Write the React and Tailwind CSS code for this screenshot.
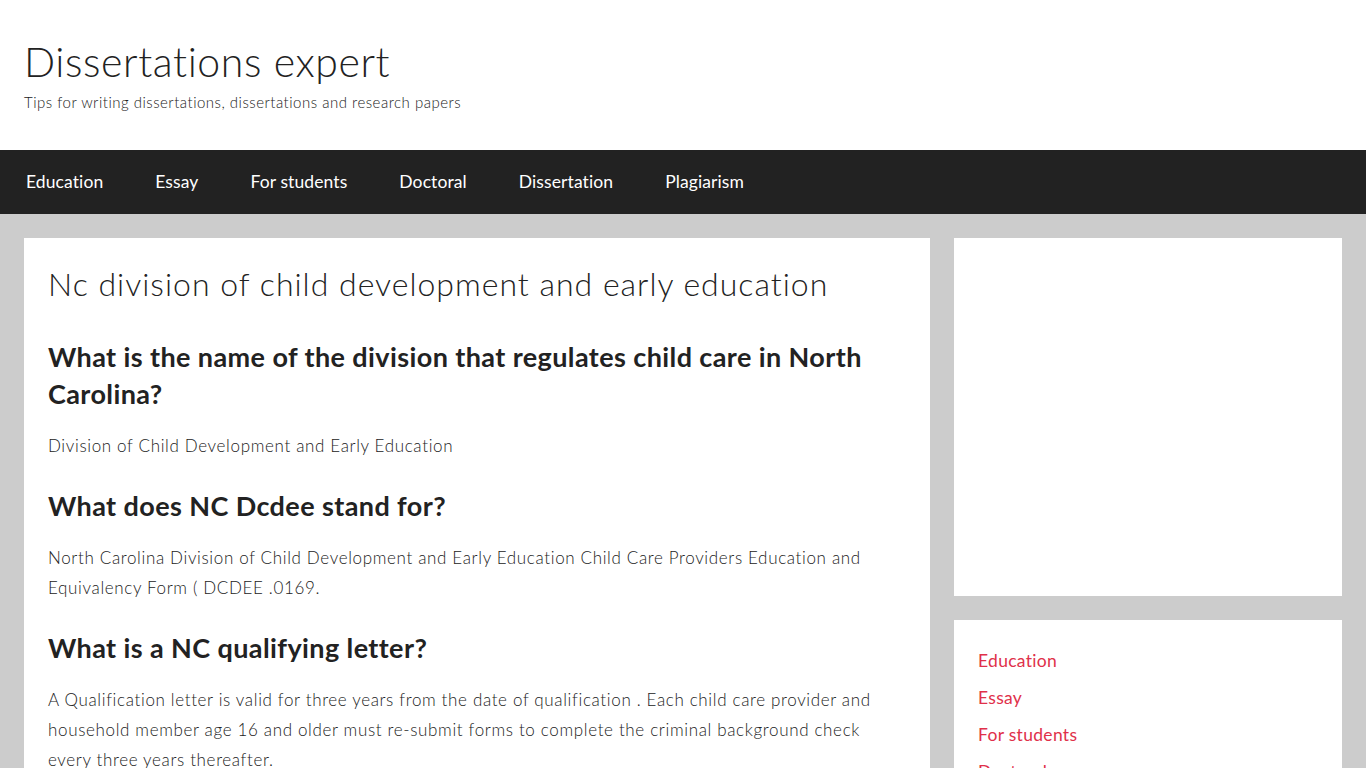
const navItems = ["Education", "Essay", "For students", "Doctoral", "Dissertation", "Plagiarism"];

const sections = [
  {
    q: "What is the name of the division that regulates child care in North Carolina?",
    a: "Division of Child Development and Early Education",
  },
  {
    q: "What does NC Dcdee stand for?",
    a: "North Carolina Division of Child Development and Early Education Child Care Providers Education and Equivalency Form ( DCDEE .0169.",
  },
  {
    q: "What is a NC qualifying letter?",
    a: "A Qualification letter is valid for three years from the date of qualification . Each child care provider and household member age 16 and older must re-submit forms to complete the criminal background check every three years thereafter.",
  },
];

const App = () => {
  return (
    <div className="min-h-screen bg-[#cccccc] font-['Lato',sans-serif] text-[#222]">
      {/* HEADER */}
      <header className="bg-white h-[150px] px-6 pt-[37px]">
        <h1 className="text-[41px] leading-[50px] font-light tracking-[0.6px] text-[#222]">Dissertations expert</h1>
        <p className="text-[15px] leading-5 mt-[5px] text-[#222] font-light tracking-[0.5px]">
          Tips for writing dissertations, dissertations and research papers
        </p>
      </header>

      {/* NAV */}
      <nav className="bg-[#222222] h-16 flex items-center">
        {navItems.map((item) => (
          <a key={item} className="px-[26px] text-[17.5px] tracking-[0.1px] text-white font-normal cursor-pointer">
            {item}
          </a>
        ))}
      </nav>

      {/* MAIN */}
      <div className="flex gap-6 px-6 pt-6">
        <main className="w-[906px] bg-white px-6 pt-[26px] pb-6">
          <h1 className="text-[32px] leading-[40px] font-light tracking-[1px] text-[#222]">
            Nc division of child development and early education
          </h1>
          <div className="mt-[34px]">
            {sections.map((s, i) => (
              <div key={i} className={i > 0 ? "mt-[26px]" : ""}>
                <h2 className="text-[27px] leading-[37px] font-bold tracking-[0.4px] text-[#222]">{s.q}</h2>
                <p className="mt-[19px] text-[17px] leading-[30px] text-[#222] font-light tracking-[0.65px]">{s.a}</p>
              </div>
            ))}
          </div>
        </main>

        <aside className="w-[388px] flex flex-col gap-6">
          <div className="bg-white h-[358px]"></div>
          <div className="bg-white px-6 pt-[22px] pb-4">
            {["Education", "Essay", "For students", "Doctoral", "Dissertation"].map((l) => (
              <a key={l} className="block text-[17.5px] leading-[37px] tracking-[0.3px] text-[#e0304a] cursor-pointer">
                {l}
              </a>
            ))}
          </div>
        </aside>
      </div>
    </div>
  );
};

export default App;
